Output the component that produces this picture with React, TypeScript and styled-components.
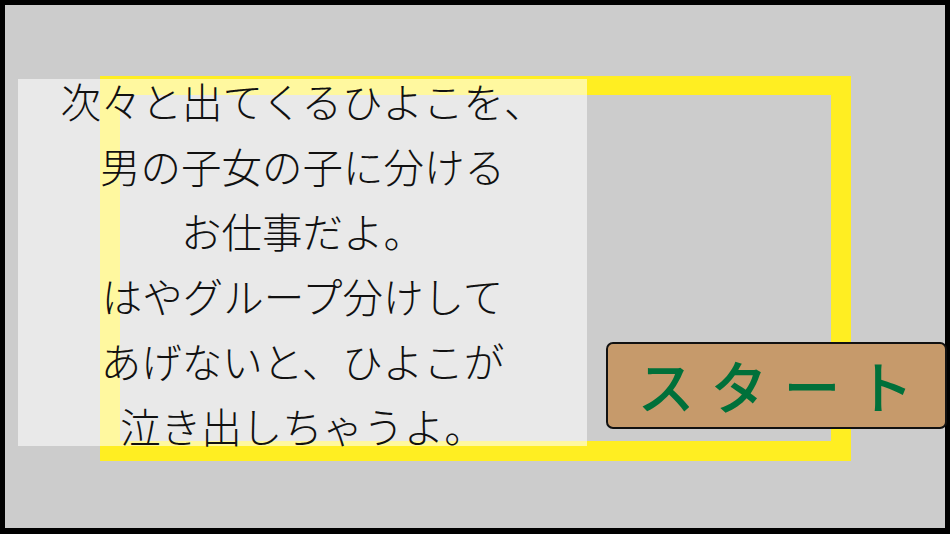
import React from "react";
import styled, { createGlobalStyle } from "styled-components";

const GlobalStyle = createGlobalStyle`
  html, body {
    margin: 0;
    padding: 0;
    background: #000;
  }
  body {
    font-family: "Noto Sans CJK JP", "Noto Sans", sans-serif;
  }
`;

const Screen = styled.div`
  width: 950px;
  height: 534px;
  background: #000;
  padding: 5px 5px 6px 5px;
  box-sizing: border-box;
  overflow: hidden;
`;

// the slide: layers overlap, so they share grid lines
const Stage = styled.div`
  width: 100%;
  height: 100%;
  background: #cccccc;
  display: grid;
  grid-template-columns: 13px 82px 487px 19px 245px 96px;
  grid-template-rows: 71px 3px 263px 87px 17px 15px;
`;

const YellowFrame = styled.div`
  grid-column: 3 / 6;
  grid-row: 2 / 7;
  border: 20px solid #ffee22;
  border-top-width: 19px;
`;

const Panel = styled.div`
  grid-column: 2 / 4;
  grid-row: 3 / 6;
  z-index: 1;
  background: rgba(255, 255, 255, 0.57);
  display: flex;
  flex-direction: column;
  align-items: center;
  justify-content: center;
  overflow: visible;
  min-height: 0;
`;

const Line = styled.p`
  margin: 0;
  font-size: 40.5px;
  line-height: 65px;
  font-weight: 300;
  color: #111;
  white-space: nowrap;
  flex-shrink: 0;
`;

const StartButton = styled.button`
  grid-column: 5 / 7;
  grid-row: 4 / 5;
  z-index: 2;
  margin: 0;
  padding: 0 0 4px 14px;
  background: #c69a6b;
  border: 2px solid #111;
  border-radius: 7px;
  color: #00703a;
  font-family: "Noto Sans CJK JP", sans-serif;
  font-size: 57px;
  font-weight: 500;
  letter-spacing: 16px;
  display: flex;
  align-items: center;
  justify-content: center;
  cursor: pointer;
`;

const lines = [
  "次々と出てくるひよこを、",
  "男の子女の子に分ける",
  "お仕事だよ。",
  "はやグループ分けして",
  "あげないと、ひよこが",
  "泣き出しちゃうよ。",
];

export default function App() {
  return (
    <>
      <GlobalStyle />
      <Screen>
        <Stage>
          <YellowFrame />
          <Panel>
            {lines.map((l) => (
              <Line key={l}>{l}</Line>
            ))}
          </Panel>
          <StartButton>スタート</StartButton>
        </Stage>
      </Screen>
    </>
  );
}
